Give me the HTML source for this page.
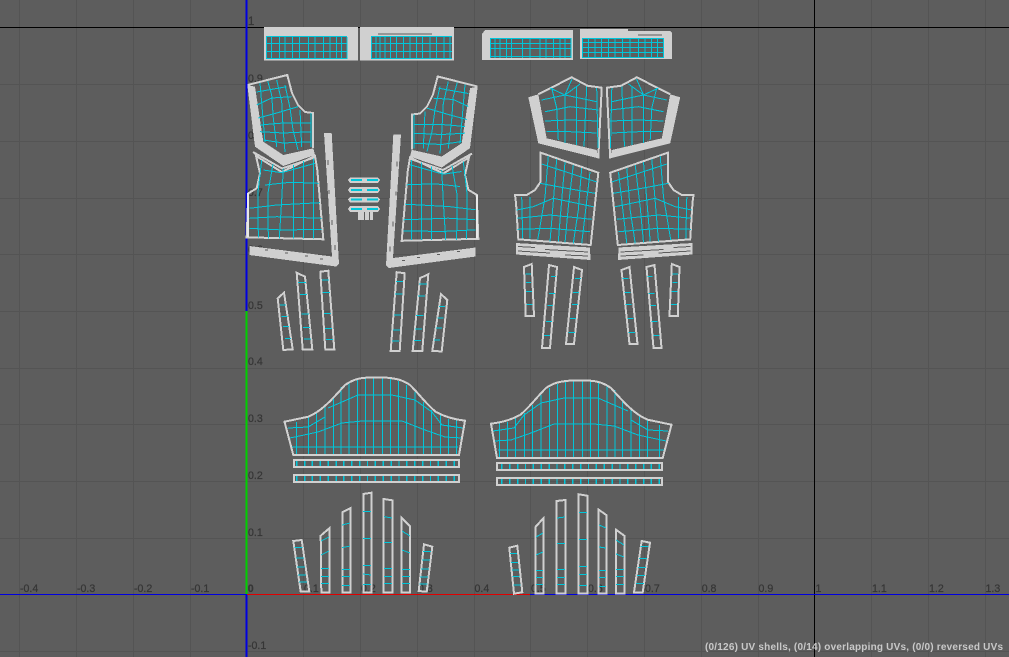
<!DOCTYPE html>
<html><head><meta charset="utf-8"><title>UV Editor</title>
<style>
html,body{margin:0;padding:0;width:1009px;height:657px;overflow:hidden;background:#5d5d5d}
svg{display:block}
.g{fill:none;stroke:#545454;stroke-width:1;shape-rendering:crispEdges}
.a{shape-rendering:crispEdges;fill:none}
.l{font:10.6px "Liberation Sans",sans-serif;fill:#363636;stroke:#363636;stroke-width:.25}
.s{shape-rendering:crispEdges}
.c{fill:none;stroke:#00c6da;stroke-width:1}
.c2{fill:none;stroke:#00c6da;stroke-width:1.6}
.o{fill:none;stroke:#d0d0d0;stroke-width:2}
.f{fill:#d0d0d0;stroke:none}
.b{fill:#5d5d5d;stroke:none}
.d{fill:none;stroke:#5d5d5d;stroke-width:1}
</style></head><body>
<svg xmlns="http://www.w3.org/2000/svg" width="1009" height="657" viewBox="0 0 1009 657">
<rect width="1009" height="657" fill="#5d5d5d"/>
<path class="g" d="M19.5 0V657M76.5 0V657M133.5 0V657M190.5 0V657M303.5 0V657M360.5 0V657M417.5 0V657M474.5 0V657M530.5 0V657M587.5 0V657M644.5 0V657M701.5 0V657M758.5 0V657M871.5 0V657M928.5 0V657M985.5 0V657M0 84.5H1009M0 141.5H1009M0 198.5H1009M0 254.5H1009M0 311.5H1009M0 368.5H1009M0 424.5H1009M0 481.5H1009M0 538.5H1009M0 651.5H1009"/>
<g class="a">
<path stroke="#000" stroke-width="1" d="M0 27.5H1009M814.5 0V657"/>
<path stroke="#0000e0" stroke-width="1" d="M0 594.5H247M530 594.5H1009"/>
<path stroke="#0000e0" stroke-width="2" d="M246.5 0V311M246.5 595V657"/>
<path stroke="#e00000" stroke-width="1" d="M247 594.5H530"/>
<path stroke="#00d000" stroke-width="2" d="M246.5 311V594"/>
</g>
<g class="l">
<text x="20" y="592">-0.4</text><text x="77" y="592">-0.3</text><text x="134" y="592">-0.2</text><text x="191" y="592">-0.1</text>
<text x="247.7" y="592" style="font-weight:bold">0</text><text x="304" y="592">0.1</text><text x="361" y="592">0.2</text><text x="418" y="592">0.3</text><text x="474.5" y="592">0.4</text><text x="531" y="592">0.5</text><text x="588" y="592">0.6</text><text x="645" y="592">0.7</text><text x="701.7" y="592">0.8</text><text x="758.5" y="592">0.9</text><text x="815.5" y="592">1</text><text x="872" y="592">1.1</text><text x="929" y="592">1.2</text><text x="985.5" y="592">1.3</text>
<text x="248" y="25" style="font-size:11.5px">1</text><text x="248" y="82">0.9</text><text x="248" y="139">0.8</text><text x="248" y="196">0.7</text><text x="248" y="253">0.6</text><text x="248" y="309">0.5</text><text x="248" y="365">0.4</text><text x="248" y="422">0.3</text><text x="248" y="479">0.2</text><text x="248" y="536">0.1</text><text x="248" y="649">-0.1</text>
</g>

<g class="s">
<!-- top rectangles -->
<path class="f" d="M264 27H358V60.5H264Z"/><rect class="b" x="266" y="37" width="81" height="22"/>
<path class="c" d="M266 36.7H347M266 43.3H347M266 51.7H347M266 58.7H347M266.5 37V59M271.7 37V59M279.3 37V59M285 37V59M292.7 37V59M299.3 37V59M308.3 37V59M315 37V59M323.3 37V59M330 37V59M336.7 37V59M341.7 37V59M347 37V59"/>
<path class="f" d="M360 27H454V60.5H360Z"/><rect class="b" x="371" y="37" width="81" height="22"/>
<path class="c" d="M371 36.7H452M371 43.3H452M371 51.7H452M371 58.7H452M371.5 37V59M376 37V59M380 37V59M385 37V59M390.7 37V59M396.7 37V59M403.3 37V59M410 37V59M416.7 37V59M422.7 37V59M430 37V59M436.7 37V59M444 37V59M450 37V59"/>
<path class="d" d="M378 34H390M389 34H432"/>
<path class="f" d="M485 30H573V60H482V34Z"/><rect class="b" x="490" y="38" width="81" height="20"/>
<path class="c" d="M490 38.3H571M490 43.3H571M490 48.3H571M490 56.7H571M490.5 38V58M495 38V58M500 38V58M506.7 38V58M511.7 38V58M522.3 38V58M530 38V58M540 38V58M546 38V58M553.3 38V58M560 38V58M565 38V58M571 38V58"/>
<path class="f" d="M580 29H628V31H670L672 33V59H580Z"/><rect class="b" x="582" y="38" width="81" height="20"/>
<path class="c" d="M582 38.3H663.5M582 42.3H663.5M582 47.3H663.5M582 52.7H663.5M582 57.7H663.5M582.5 38V58M588.3 38V58M595 38V58M601.7 38V58M608.3 38V58M615 38V58M622.7 38V58M630 38V58M638.3 38V58M645 38V58M651.7 38V58M657.3 38V58M663.3 38V58"/>
<path class="d" d="M638 35H662"/>

<!-- front left block -->
<g id="fl">
<path class="f" d="M247.3 85L255 86.7L263.3 141.7L283.3 155L313.3 148.3L315 155L283.3 166L255 146.7Z"/>
<path class="o" d="M247.5 85L287.3 75L292 93L298 105L305 112L313 113V148"/>
<path class="c" d="M260 83L265 142M267.7 81L271.7 95L273.3 118L276.7 147M276.7 80L281.7 102L283.3 132L285 152M285 85L290 108L293 130L298 150M300 110L301.7 147M311 113V147M256.7 92L286.7 86.7M256.7 105L271.7 98L291.7 96.7M258.3 118L276.7 113L298 106.7M260 125L283.3 123L311.7 123M260 131.7L283.3 133L311.7 131.7M263.3 140L283.3 143L311.7 141.7"/>
<path class="o" d="M256 156L281.7 172L315 156L317.3 170L323.3 239.3L246.7 237.3L248.3 193.3L256.7 188.3L260 173.3Z"/>
<path class="o" d="M253 152L282 168.5L316 157"/>
<path class="c" d="M263.3 170L281.7 172.7L315 163.3M265 185L290 182.3L318.3 183.3M249.3 208.3L276.7 205L320 202.7M249.3 218.3L276.7 216.7L321.7 218.3M249.3 228.3L283.3 230L321.7 229.3M261.7 160L258 192L258.3 237.3M273 164L268 193L268.3 238.3M283.3 168.3L281.7 200L279.3 238.3M293.3 165L293.3 210V238.3M303.3 161L303.3 200V238.3M313.3 158.3V238.3"/>
<path d="M248 193V237" stroke="#e8e8e8" stroke-width="2"/>
<path class="f" d="M324 133L331.7 133L339 264L336 266.5L249.3 255L249.3 246L332 256.5Z"/>
<path class="d" d="M328 160V165M329 190V194M332 220V225M335 245V250M265 250H268M285 253H288M305 256H308M320 259H323"/>
<!-- strips -->
<path class="o" d="M277.7 298.3L284 292.7L292.7 349.3L283.3 350Z"/>
<path class="o" d="M296.7 272.7L305 276.7L312.3 349.3H302.7Z"/>
<path class="o" d="M320.3 271.7L328.3 270.7L334.3 349.3H325.3Z"/>
<path class="c" d="M280 305H286M281.5 316.7H287.5M283 326.7H289M285 338.3H291M298 282.3H306M300 294.3H307M301.5 314H309M303 327.7H310M304 339H311M322 280H329M322.5 292.3H330M324 313.3H331M325 328.3H332M326 339.3H333"/>
</g>
<use href="#fl" transform="translate(725,1.5) scale(-1,1)"/>

<!-- tabs -->
<path class="f" d="M350 177.5H378L380 180L378 183H350L348 180ZM350 187H378L380 190L378 193H350L348 190ZM350 197H378L380 199.5L378 202.5H350L348 199.5ZM350 206H378L380 209L378 212H350L348 209Z"/>
<path class="c2" d="M351 180H362M367 180H378M351 190H362M367 190H378M351 199.5H362M367 199.5H378M351 209H362M367 209H378"/>
<path class="f" d="M358 212H364V220H358ZM365 212H369V220H365ZM370 212H373V220H370Z"/>

<!-- back panels left -->
<g>
<path class="f" d="M528.3 97.3L538.3 94.3L546.7 138.3L596.7 150L598.3 158.3L538.3 143.3Z"/>
<path class="o" d="M538.3 94.3L571.7 77.3L587.3 85.7L601.7 87.7L598.3 158.3"/>
<path class="c" d="M551.7 88L556.7 108L558.3 140M565 95V143M576.7 86.7V145M586.7 86.7L584 146.7M596.7 88L598 148M541.7 100L565 95L596.7 101.7M545 111.7L570 106.7L598.3 110M545 121L570 120L598.3 121M546.7 131.7L570 131.7L596.7 133M565 95L550 88M565 95L572 79M565 95L580 84"/>
<path class="o" d="M540.7 152.7L598.3 172.7L590.7 245L518.3 239.3L516 202.7L515 195H526.7L535 190L540.7 181.7Z"/>
<path class="c" d="M548.3 156L545 197L537.7 240M556.7 159L554 193L550 241.7M565 162L561.7 200L558.3 241.7M573.3 165L568.3 207L565 242.7M581.7 168L578.3 210L573.3 243.3M590 172L586 207L581.7 243.3M521.7 197L522.7 238.3M530 197V238.3M541.7 164L596.7 182M540 183.3L566.7 188.3L595 193.3M516.7 210L533.3 206.7L553.3 198.3L593.3 206.7M517.3 218.3L550 215L591.7 219.3M517.3 229.3L550 228.3L590 231.7"/>
<path class="f" d="M516 243L590 247.5L590.5 260L516 254.5Z"/>
<path class="d" d="M518 246.5L535 247.5M545 249.5L588 252M518 251L550 253M565 255L588 256"/>
<path class="o" d="M524 267L531.7 264L534 316H525.7Z"/>
<path class="o" d="M549 265L557 267L550 348H542Z"/>
<path class="o" d="M574 267L582 270L574 344H566Z"/>
<path class="c" d="M525.5 274H531M526 282.3H531M526 291.7H532M526.5 304.3H532.5M551 276.7H556M549 293.3H555M547.5 305.7H553M546 321.3H552M544 335.3H550M575 278.3H581M573 292.7H579M572 304.3H578M570 318.3H576M568.5 332.3H575"/>
</g>
<!-- back panels right (upper + lower) -->
<g transform="translate(1208.5,0) scale(-1,1)">
<path class="f" d="M528.3 97.3L538.3 94.3L546.7 138.3L596.7 150L598.3 158.3L538.3 143.3Z"/>
<path class="o" d="M538.3 94.3L571.7 77.3L587.3 85.7L601.7 87.7L598.3 158.3"/>
<path class="c" d="M551.7 88L556.7 108L558.3 140M565 95V143M576.7 86.7V145M586.7 86.7L584 146.7M596.7 88L598 148M541.7 100L565 95L596.7 101.7M545 111.7L570 106.7L598.3 110M545 121L570 120L598.3 121M546.7 131.7L570 131.7L596.7 133M565 95L550 88M565 95L572 79M565 95L580 84"/>
<path class="o" d="M540.7 152.7L598.3 172.7L590.7 245L518.3 239.3L516 202.7L515 195H526.7L535 190L540.7 181.7Z"/>
<path class="c" d="M548.3 156L545 197L537.7 240M556.7 159L554 193L550 241.7M565 162L561.7 200L558.3 241.7M573.3 165L568.3 207L565 242.7M581.7 168L578.3 210L573.3 243.3M590 172L586 207L581.7 243.3M521.7 197L522.7 238.3M530 197V238.3M541.7 164L596.7 182M540 183.3L566.7 188.3L595 193.3M516.7 210L533.3 206.7L553.3 198.3L593.3 206.7M517.3 218.3L550 215L591.7 219.3M517.3 229.3L550 228.3L590 231.7"/>
<path class="f" d="M516 243L590 247.5L590.5 260L516 254.5Z"/>
<path class="d" d="M518 246.5L535 247.5M545 249.5L588 252M518 251L550 253M565 255L588 256"/>
</g>
<g transform="translate(1203.5,0) scale(-1,1)">
<path class="o" d="M524 267L531.7 264L534 316H525.7Z"/>
<path class="o" d="M549 265L557 267L550 348H542Z"/>
<path class="o" d="M574 267L582 270L574 344H566Z"/>
<path class="c" d="M525.5 274H531M526 282.3H531M526 291.7H532M526.5 304.3H532.5M551 276.7H556M549 293.3H555M547.5 305.7H553M546 321.3H552M544 335.3H550M575 278.3H581M573 292.7H579M572 304.3H578M570 318.3H576M568.5 332.3H575"/>
</g>

<!-- sleeves -->
<g id="sl">
<path class="c" d="M296.7 422V455M308.3 417V455M316.7 412V455M325 405V455M333.3 397V455M341 387V455M349 382V455M357.7 379.5V455M365.7 378V455M373.7 378V455M382.3 378V455M390.7 379V455M398.3 381V455M406.7 385V455M415 392V455M423.3 402V455M431.7 410V455M440.7 415V455M448.3 419V455M456.7 420V455M328 408L342 402L358 395H392L415 400L432 412L442 425L463 428M288 428L308 427L325 417M290 438L318 432L342 423L362 421H402L425 430L445 437L462 438M292 447H458"/>
<path class="o" d="M293.3 455L284.5 421.7L308.3 416.7C320 412 330 402 345 385C352 380 358 378 366 377.7H387C396 378.5 403 380 410 385C420 395 428 406 436 412C445 417 455 419.5 465 420.7L459 455Z"/>
<rect class="o" x="294" y="460" width="165" height="7"/>
<rect class="o" x="294" y="475" width="165" height="7"/>
<path class="c" stroke-dasharray="1.4 6.47" style="stroke-width:5" d="M296 463.5H458M296 478.5H458"/>
</g>
<use href="#sl" transform="translate(956,3) scale(-1,1)"/>

<!-- fingers -->
<path class="o" d="M293.3 541L301.7 540L309.3 591.7H300.7ZM320.7 535.7L329.3 528.3V592.3H321.3ZM342.3 512.3L350.3 508.3V592.3H342.3ZM363.3 494L371.3 492.7V592.3H363.3ZM383.7 499L392.3 500.3V592.3H383.7ZM401.7 517.7L410 526.3V592.3H401.7ZM424 544.3L432.3 546.7L426.7 591.7L418.7 591Z"/>
<path class="c" d="M294.3 547.7h8M296 558h8M297 567h8M298 575h8M299 582h8M321 541L329 537M321 555L329 551M321 568.3h8M321 576.3h8M321 583.7h8M342 525L350 523M342 547.7L350 546M342 569.3h8M342 576.7h8M342 585.3h8M363 511.7h8M363 538.3h8M363 565.3h8M363 574L371 575M363 584.3h8M384 516.7L392 518M384 542.3h8M384 568.3h8M384 576.3h8M384 583.7h8M402 531L410 536M402 550L410 553M402 569.3h8M402 576.3h8M402 583.7h8M423 551.7h8M422 560h8M421 569h8M420 577h8M419.5 584h8"/>
<path class="o" d="M509.3 547.7L517.3 545.7L522.3 592.3L514 593.7ZM535.7 526.7L543.3 518.3V593.3H535.7ZM556.7 501L565.3 500V593.3H556.7ZM578.7 494.3L587.3 495.7V593.3H578.7ZM598.7 509.7L606.3 515V593.3H598.7ZM616 529.7L624.3 535.7V593.3H616ZM641.7 541L650 542.7L642.7 592.3H634Z"/>
<path class="c" d="M510 553.3h7M511 562.3h7M512 570h7M512.7 576.7h7M513.5 585h7M536 537L543 533M536 555L543 552M536 570.7h7M536 577.3h7M536 584.3h7M557 518L565 517M557 543.3h8M557 569.3h8M557 577.3h8M557 584.3h8M579 512.3h8M579 539.3h8M579 566.7h8M579 574.3h8M579 585.3h8M599 525L606 528M599 547L606 548M599 570.7h7M599 577.3h7M599 586.3h7M616 540L624 545M616 554L624 557M616 569.3h8M616 576.3h8M616 584.3h8M640.5 546.7h8M639 558.3h8M638 567.3h8M637 575.7h8M636 583.3h8"/>
</g>

<text x="705" y="650" textLength="298" lengthAdjust="spacing" style="font:bold 10px 'Liberation Sans',sans-serif;fill:#c9c9c9">(0/126) UV shells, (0/14) overlapping UVs, (0/0) reversed UVs</text>
</svg>
</body></html>
